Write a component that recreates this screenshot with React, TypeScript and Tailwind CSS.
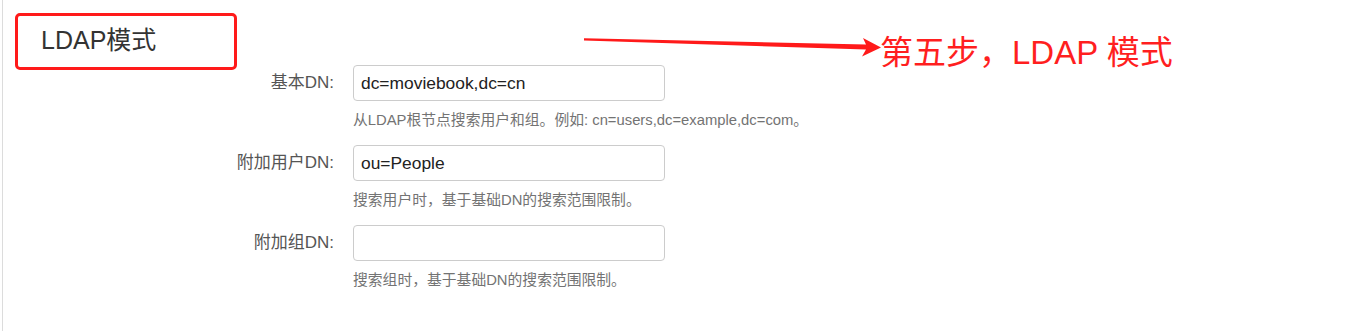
import React from 'react';

const fontStack = { fontFamily: '"Liberation Sans", "Noto Sans CJK SC", sans-serif' };

interface FieldRowProps {
  label: string;
  value: string;
  help: string;
}

const FieldRow: React.FC<FieldRowProps> = ({ label, value, help }) => {
  return (
    <div className="flex pb-[15px]">
      <div className="w-[294px] h-[36px] flex items-center justify-end pr-[1px] text-[17px] text-[#555]">
        {label}
      </div>
      <div className="ml-[18px] flex flex-col">
        <input
          readOnly
          value={value}
          className="w-[312px] h-[36px] border border-[#ccc] rounded-[4px] pl-[7px] text-[17.4px] text-[#222] bg-white focus:outline-none"
          style={fontStack}
        />
        <p className="mt-[9px] leading-[20px] text-[14.8px] text-[#737373]">{help}</p>
      </div>
    </div>
  );
};

const App: React.FC = () => {
  return (
    <div className="relative h-[331px] w-[1345px] bg-white overflow-hidden" style={fontStack}>
      <div className="ml-[2px] h-full border-l border-[#dcdcdc] pl-[38px] pt-[25px]">
        <h3 className="text-[25px] leading-[30px] text-[#333]">LDAP模式</h3>
        <div className="mt-[10px] flex flex-col">
          <FieldRow
            label="基本DN:"
            value="dc=moviebook,dc=cn"
            help="从LDAP根节点搜索用户和组。例如: cn=users,dc=example,dc=com。"
          />
          <FieldRow label="附加用户DN:" value="ou=People" help="搜索用户时，基于基础DN的搜索范围限制。" />
          <FieldRow label="附加组DN:" value="" help="搜索组时，基于基础DN的搜索范围限制。" />
        </div>
      </div>

      {/* annotation overlay */}
      <div className="absolute left-[15px] top-[13px] w-[222px] h-[57px] border-[3px] border-[#ff1a1a] rounded-[5px]" />
      <svg className="absolute left-0 top-0" width="1345" height="331" viewBox="0 0 1345 331">
        <polygon
          points="584,38.2 866,44.5 863,38 881,47.5 862,56.5 866,49.5 584,40.4"
          fill="#ff1a1a"
        />
      </svg>
      <div className="absolute left-[880px] top-[33px] text-[33px] leading-[40px] text-[#ff1f1f] whitespace-nowrap">
        第五步，LDAP 模式
      </div>
    </div>
  );
};

export default App;
